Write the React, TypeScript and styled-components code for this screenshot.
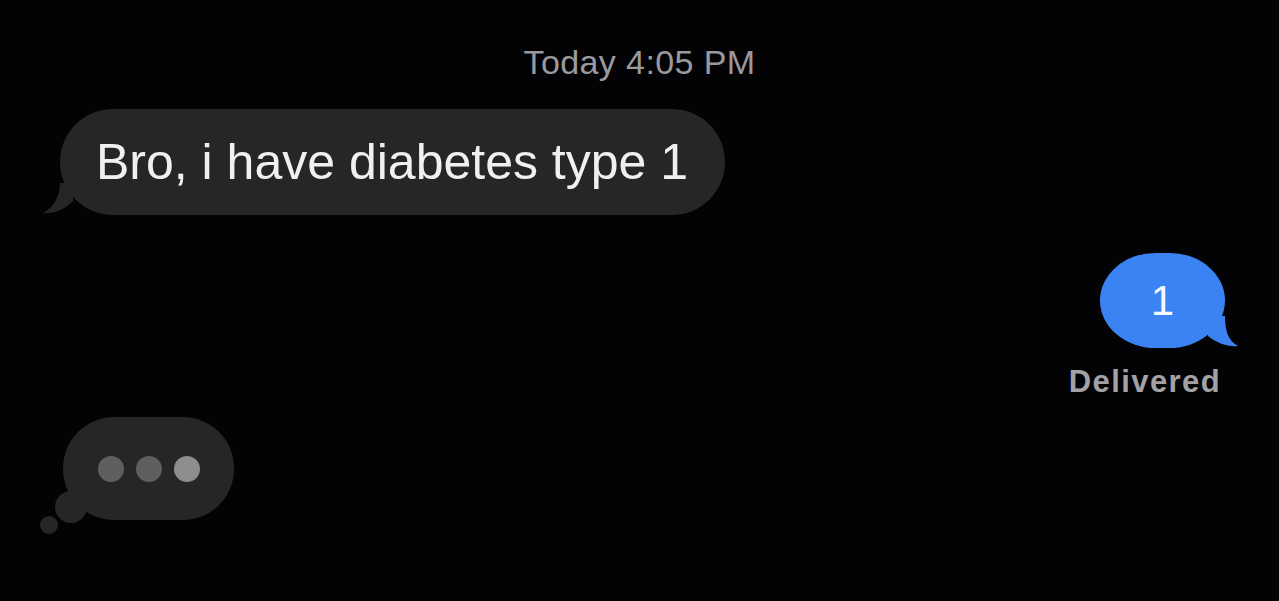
import React from "react";
import styled, { createGlobalStyle } from "styled-components";

const Global = createGlobalStyle`
  html, body { margin: 0; padding: 0; background: #030305; }
  body { font-family: "Liberation Sans", Arial, sans-serif; }
`;

const Screen = styled.div`
  width: 1279px;
  height: 601px;
  background: #030305;
  display: flex;
  flex-direction: column;
  padding-top: 44px;
  box-sizing: border-box;
  overflow: hidden;
`;

const Stamp = styled.div`
  align-self: center;
  color: #9a9a9e;
  font-size: 34px;
  line-height: 36px;
  letter-spacing: 0.4px;
`;

const Row = styled.div<{ $right?: boolean; $top: number; $side: number }>`
  display: flex;
  justify-content: ${(p) => (p.$right ? "flex-end" : "flex-start")};
  margin-top: ${(p) => p.$top}px;
  ${(p) => (p.$right ? `padding-right: ${p.$side}px;` : `padding-left: ${p.$side}px;`)}
`;

const GrayBubble = styled.div`
  position: relative;
  height: 106px;
  padding: 0 37px 0 36px;
  border-radius: 53px;
  background: #262628;
  color: #f0f0f2;
  font-size: 50px;
  display: flex;
  align-items: center;
`;

const BlueBubble = styled.div`
  position: relative;
  width: 125px;
  height: 95px;
  border-radius: 56px / 48px;
  background: #3b83f3;
  color: #f4f8ff;
  font-size: 42px;
  display: flex;
  align-items: center;
  justify-content: center;
`;

const Tail = styled.svg<{ $right?: boolean }>`
  position: absolute;
  bottom: 0;
  ${(p) => (p.$right ? "right: -13px;" : "left: -17px;")}
  width: 40px;
  height: 32px;
  overflow: visible;
`;

const Delivered = styled.div`
  color: #a2a2a6;
  font-size: 31px;
  font-weight: 700;
  line-height: 32px;
  letter-spacing: 1.4px;
`;

const TypingBubble = styled.div`
  position: relative;
  width: 171px;
  height: 103px;
  border-radius: 51px;
  background: #262628;
  display: flex;
  align-items: center;
  justify-content: center;
  gap: 12px;
`;

const Dot = styled.span<{ $light?: boolean }>`
  width: 26px;
  height: 26px;
  border-radius: 50%;
  background: ${(p) => (p.$light ? "#8d8d90" : "#5f5f62")};
`;

const Puff = styled.span<{ $size: number; $left: number; $top: number }>`
  position: absolute;
  width: ${(p) => p.$size}px;
  height: ${(p) => p.$size}px;
  left: ${(p) => p.$left}px;
  top: ${(p) => p.$top}px;
  border-radius: 50%;
  background: #262628;
`;

export default function App() {
  return (
    <>
      <Global />
      <Screen>
        <Stamp>Today 4:05 PM</Stamp>
        <Row $top={29} $side={60}>
          <GrayBubble>
            <Tail viewBox="0 0 40 32">
              <path d="M17 0 C17 14 10 25 0 30 C9 31 20 28 30 18 L30 0 Z" fill="#262628" />
            </Tail>
            Bro, i have diabetes type 1
          </GrayBubble>
        </Row>
        <Row $right $top={38} $side={54}>
          <BlueBubble>
            <Tail $right viewBox="0 0 40 32">
              <path d="M27 0 C27 14 30 25 40 30 C31 31 20 28 10 20 L10 0 Z" fill="#3b83f3" />
            </Tail>
            1
          </BlueBubble>
        </Row>
        <Row $right $top={18} $side={58}>
          <Delivered>Delivered</Delivered>
        </Row>
        <Row $top={19} $side={63}>
          <TypingBubble>
            <Dot />
            <Dot />
            <Dot $light />
            <Puff $size={32} $left={-8} $top={74} />
            <Puff $size={18} $left={-23} $top={99} />
          </TypingBubble>
        </Row>
      </Screen>
    </>
  );
}
